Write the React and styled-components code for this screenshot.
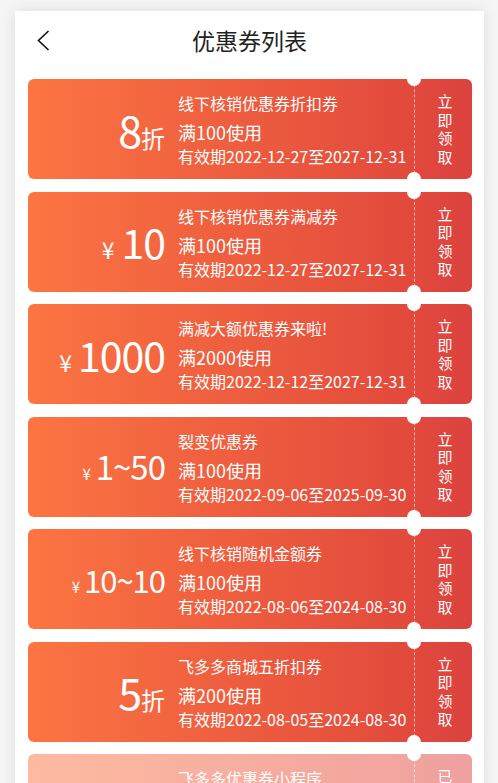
import React from 'react';
import styled, { createGlobalStyle } from 'styled-components';

const GlobalStyle = createGlobalStyle`
  html, body {
    margin: 0;
    padding: 0;
    background: #f5f5f5;
    overflow: hidden;
  }
  body {
    font-family: "Noto Sans CJK SC", "Noto Sans", sans-serif;
  }
`;

const Page = styled.div`
  padding: 11px 14px 0 15px;
`;

const Panel = styled.div`
  background: #ffffff;
  box-shadow: 0 0 14px rgba(0, 0, 0, 0.1);
  min-height: 800px;
`;

const Header = styled.div`
  height: 58px;
  display: grid;
  grid-template-columns: 1fr auto 1fr;
  align-items: center;
`;

const BackButton = styled.div`
  padding-left: 22px;
  display: flex;
  align-items: center;
  cursor: pointer;
`;

const Title = styled.h1`
  margin: 0;
  font-size: 23px;
  font-weight: 400;
  color: #222;
`;

const List = styled.div`
  padding: 10px 12px 0 13px;
  display: flex;
  flex-direction: column;
  gap: 12.5px;
`;

const Coupon = styled.div`
  height: 100px;
  display: flex;
  border-radius: 6px;
  background: linear-gradient(90deg, #fc7542 0%, #e24a3c 85%, #dc423e 100%);
  color: #fff;
  opacity: ${props => (props.disabled ? 0.5 : 1)};
`;

const Main = styled.div`
  width: 386px;
  display: flex;
  align-items: center;
`;

const Amount = styled.div`
  width: 137px;
  display: flex;
  justify-content: flex-end;
  align-items: baseline;
  white-space: nowrap;
  line-height: 1;
`;

const Symbol = styled.span`
  font-size: ${props => props.size}px;
  margin-right: ${props => props.gap}px;
`;

const Value = styled.span`
  font-size: ${props => props.size}px;
  letter-spacing: -1px;
`;

const Unit = styled.span`
  font-size: 24px;
`;

const Info = styled.div`
  margin-left: 13px;
  padding-bottom: 4px;
  display: flex;
  flex-direction: column;
  white-space: nowrap;
`;

const Name = styled.div`
  font-size: 16px;
  line-height: 24px;
`;

const Rule = styled.div`
  font-size: 18px;
  line-height: 34px;
`;

const Period = styled.div`
  font-size: 16px;
  line-height: 14px;
`;

const Stub = styled.div`
  position: relative;
  flex: 1;
  border-left: 1px dashed rgba(255, 255, 255, 0.6);
  display: flex;
  align-items: flex-start;
  justify-content: center;
  padding-top: 13px;

  &::before,
  &::after {
    content: '';
    position: absolute;
    left: -8px;
    width: 14px;
    height: 14px;
    border-radius: 50%;
    background: #fff;
  }
  &::before {
    top: -7px;
  }
  &::after {
    bottom: -7px;
  }
`;

const StubText = styled.div`
  width: 16px;
  font-size: 15px;
  line-height: 18.5px;
  text-align: center;
  word-break: break-all;
  margin-left: 3px;
`;

const coupons = [
  { name: '线下核销优惠券折扣券', value: '8', unit: '折', rule: '满100使用', period: '有效期2022-12-27至2027-12-31' },
  { name: '线下核销优惠券满减券', value: '10', symbol: 23, size: 41, gap: 7, rule: '满100使用', period: '有效期2022-12-27至2027-12-31' },
  { name: '满减大额优惠券来啦!', value: '1000', symbol: 23, size: 41, gap: 6, rule: '满2000使用', period: '有效期2022-12-12至2027-12-31' },
  { name: '裂变优惠券', value: '1~50', symbol: 15, size: 33, gap: 5, rule: '满100使用', period: '有效期2022-09-06至2025-09-30' },
  { name: '线下核销随机金额券', value: '10~10', symbol: 15, size: 31, gap: 4, rule: '满100使用', period: '有效期2022-08-06至2024-08-30' },
  { name: '飞多多商城五折扣券', value: '5', unit: '折', rule: '满200使用', period: '有效期2022-08-05至2024-08-30' },
  { name: '飞多多优惠券小程序', value: '10', symbol: 23, size: 41, gap: 7, rule: '满100使用', period: '有效期2022-08-01至2024-08-30', taken: true },
];

function ChevronLeft() {
  return (
    <svg width="13" height="21" viewBox="0 0 13 21" fill="none">
      <path d="M11.5 1 L1.5 10.5 L11.5 20" stroke="#111" strokeWidth="1.6" />
    </svg>
  );
}

export default function App() {
  return (
    <Page>
      <GlobalStyle />
      <Panel>
        <Header>
          <BackButton>
            <ChevronLeft />
          </BackButton>
          <Title>优惠券列表</Title>
          <div />
        </Header>
        <List>
          {coupons.map((c, i) => (
            <Coupon key={i} disabled={c.taken}>
              <Main>
                <Amount>
                  {c.unit ? (
                    <>
                      <Value size={43}>{c.value}</Value>
                      <Unit>{c.unit}</Unit>
                    </>
                  ) : (
                    <>
                      <Symbol size={c.symbol} gap={c.gap}>¥</Symbol>
                      <Value size={c.size}>{c.value}</Value>
                    </>
                  )}
                </Amount>
                <Info>
                  <Name>{c.name}</Name>
                  <Rule>{c.rule}</Rule>
                  <Period>{c.period}</Period>
                </Info>
              </Main>
              <Stub>
                <StubText>{c.taken ? '已领取' : '立即领取'}</StubText>
              </Stub>
            </Coupon>
          ))}
        </List>
      </Panel>
    </Page>
  );
}
